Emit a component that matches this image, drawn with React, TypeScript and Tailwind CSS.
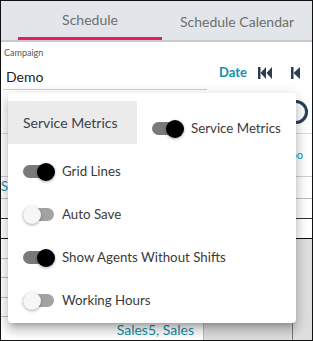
import React from "react";

function Toggle({ on }: { on: boolean }) {
  return (
    <div className="relative w-[31px] h-[18px] flex items-center shrink-0">
      <div className={`w-[31px] h-[13px] rounded-full ${on ? "bg-[#7a7a7a]" : "bg-[#a3a3a3]"}`} />
      <div
        className={`absolute top-0 w-[18px] h-[18px] rounded-full ${
          on ? "left-[14px] bg-black" : "left-0 bg-[#f6f6f6]"
        } shadow-[0_1px_3px_rgba(0,0,0,0.35)]`}
      />
    </div>
  );
}

function Row({ on, label }: { on: boolean; label: string }) {
  return (
    <div className="h-[43px] flex items-center pl-[15px]">
      <Toggle on={on} />
      <span className="ml-[8px] text-[13.3px] text-[#3a3a3a]">{label}</span>
    </div>
  );
}

export default function App() {
  return (
    <div
      className="w-[313px] h-[341px] border border-[#111] relative overflow-hidden bg-white"
      style={{ fontFamily: "Lato, 'Liberation Sans', sans-serif" }}
    >
      {/* Tabs */}
      <div className="flex bg-[#e2e6eb] border-b-2 border-[#c9cbce] pl-[17px]">
        <div className="w-[144px] h-[39px] border-b-[3px] border-[#ec1a62] flex items-center justify-center pt-[1px] text-[14px] text-[#6e6e6e]">
          Schedule
        </div>
        <div className="flex-1 h-[39px] flex items-center justify-center pt-[1px] text-[14px] text-[#6e6e6e]">
          Schedule Calendar
        </div>
      </div>

      {/* Campaign row */}
      <div className="flex">
        <div className="w-[204px] ml-[2px] border-b border-[#d0d0d0]">
          <div className="text-[9px] text-[#555] mt-[5px] ml-[1px] leading-[12px]">Campaign</div>
          <div className="text-[14px] text-[#222] mt-[9px] ml-[3px] leading-[18px] pb-[2px]">Demo</div>
        </div>
        <div className="flex items-center h-[34px] mt-[14px] ml-[12px]">
          <span className="text-[13px] font-bold text-[#1190a8]">Date</span>
          <svg width="14" height="12" viewBox="0 0 14 12" className="ml-[11px]">
            <rect x="0" y="0" width="2.5" height="12" fill="#2c3e50" />
            <polygon points="8,0 8,12 2.5,6" fill="#2c3e50" />
            <polygon points="14,0 14,12 8.5,6" fill="#2c3e50" />
          </svg>
          <svg width="9" height="12" viewBox="0 0 9 12" className="ml-[19px]">
            <rect x="0" y="0" width="2.5" height="12" fill="#2c3e50" />
            <polygon points="9,0 9,12 2.5,6" fill="#2c3e50" />
          </svg>
        </div>
      </div>

      {/* Toolbar row (under popup) */}
      <div className="h-[44px] flex justify-end items-center border-b border-[#dcdcdc] pr-[6px]">
        <div className="w-[24px] h-[24px] rounded-full border-[3px] border-[#2c3e50] mr-[-2px]" />
      </div>
      <div className="h-[43px] flex justify-end items-center pr-[9px] border-b border-[#cfcfcf]">
        <span className="text-[11px] text-[#1190a8]">Zoo</span>
      </div>
      <div className="h-[22px] flex items-center border-b border-[#bbb]">
        <span className="text-[13px] text-[#1190a8] ml-[0px] mt-[-2px]">Sales</span>
      </div>
      <div className="h-[20px] border-b border-[#333]" />
      <div className="h-[20px] border-b border-[#111]" />
      <div className="flex h-[101px]">
        <div className="w-[203px] border-r border-[#bbb] flex flex-col">
          <div className="h-[21px] border-b border-[#bbb]" />
          <div className="h-[20px] border-b border-[#bbb]" />
          <div className="h-[20px] border-b border-[#bbb]" />
          <div className="h-[20px] border-b border-[#bbb]" />
          <div className="flex-1 flex items-center justify-end pr-[9px] pt-[2px]">
            <span className="text-[14px] text-[#1190a8]">Sales5, Sales</span>
          </div>
        </div>
        <div className="flex-1 bg-[#dedede] flex">
          <div className="w-[89px] border-r border-[#777]" />
        </div>
      </div>

      {/* Popup */}
      <div className="absolute left-[7px] top-[92px] w-[288px] h-[230px] bg-white rounded-[4px] shadow-[0_5px_5px_-3px_rgba(0,0,0,0.2),0_8px_10px_1px_rgba(0,0,0,0.14),0_3px_14px_2px_rgba(0,0,0,0.12)] pt-[8px]">
        <div className="flex h-[43px]">
          <div className="w-[129px] h-[43px] bg-[#ebebeb] flex items-center pl-[15px] text-[14px] text-[#3a3f4a]">
            Service Metrics
          </div>
          <div className="flex items-center pl-[15px] pt-[12px]">
            <Toggle on={true} />
            <span className="ml-[8px] text-[13.3px] text-[#3a3a3a]">Service Metrics</span>
          </div>
        </div>
        <div className="mt-[6px]">
          <Row on={true} label="Grid Lines" />
          <Row on={false} label="Auto Save" />
          <Row on={true} label="Show Agents Without Shifts" />
          <Row on={false} label="Working Hours" />
        </div>
      </div>
    </div>
  );
}
